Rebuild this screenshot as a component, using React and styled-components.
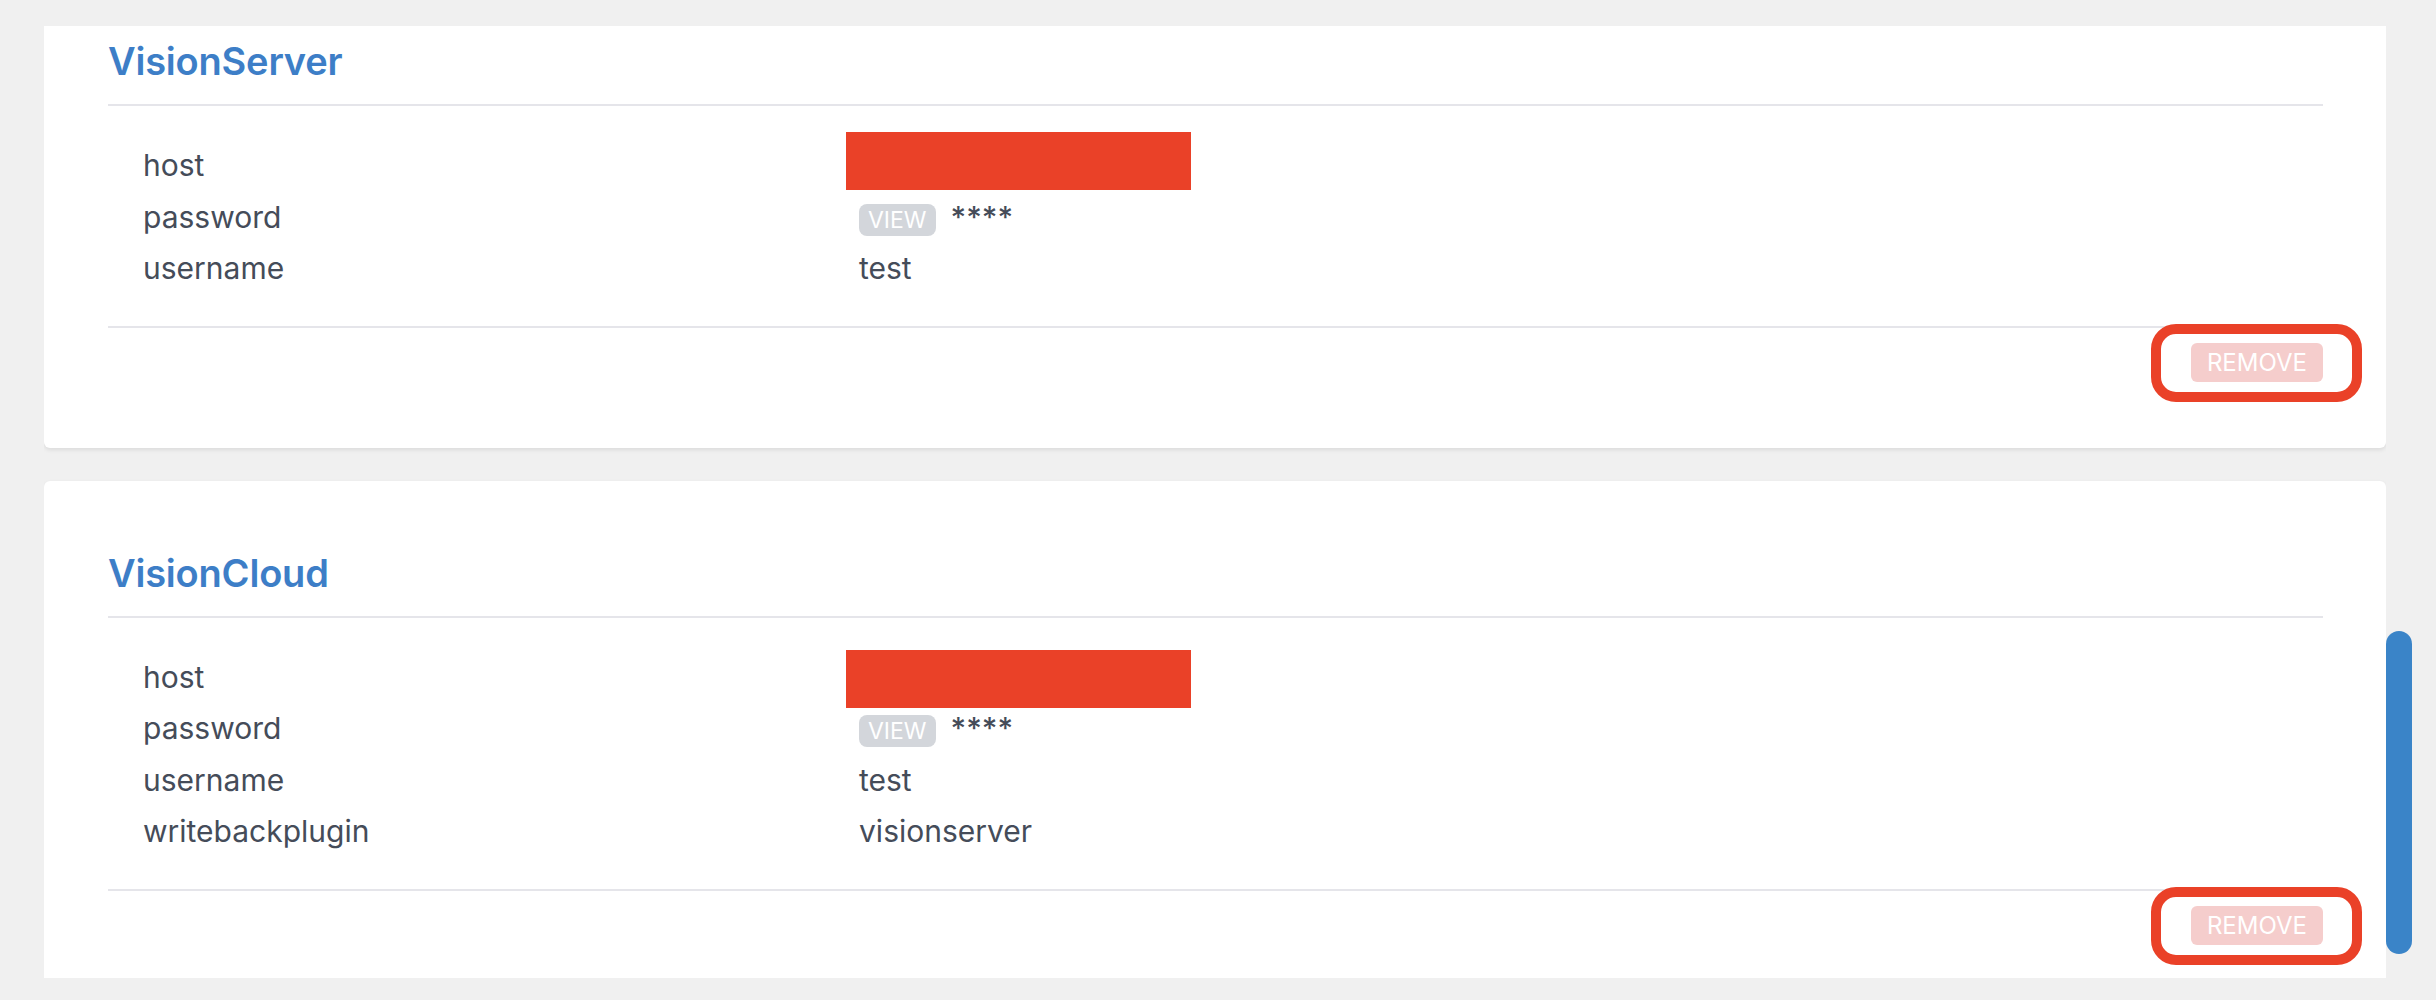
import React, { useLayoutEffect, useRef } from "react";
import styled, { createGlobalStyle } from "styled-components";

const GlobalStyle = createGlobalStyle`
  html, body {
    margin: 0;
    padding: 0;
    background: #f0f0f0;
    font-family: Inter, "Noto Sans", "Liberation Sans", sans-serif;
  }
`;

const plugins = [
  {
    name: "VisionServer",
    redactTop: -8,
    fields: [
      { key: "host", redacted: true },
      { key: "password", secret: true },
      { key: "username", value: "test" },
    ],
  },
  {
    name: "VisionCloud",
    redactTop: -2,
    fields: [
      { key: "host", redacted: true },
      { key: "password", secret: true },
      { key: "username", value: "test" },
      { key: "writebackplugin", value: "visionserver" },
    ],
  },
];

const App = () => {
  const scrollRef = useRef(null);

  useLayoutEffect(() => {
    if (scrollRef.current) scrollRef.current.scrollTop = 57;
  }, []);

  return (
    <Page>
      <GlobalStyle />
      <Viewport ref={scrollRef}>
        <List>
          {plugins.map((p) => (
            <Card key={p.name}>
              <Header>
                <Title>{p.name}</Title>
              </Header>
              <Fields>
                {p.fields.map((f) => (
                  <Row key={f.key}>
                    <Label>{f.key}</Label>
                    <Value>
                      {f.redacted && <Redaction $top={p.redactTop} />}
                      {f.secret && (
                        <>
                          <ViewBadge>VIEW</ViewBadge>
                          <Stars>****</Stars>
                        </>
                      )}
                      {f.value}
                    </Value>
                  </Row>
                ))}
              </Fields>
              <Footer>
                <RemoveWrap>
                  <Highlight />
                  <RemoveButton disabled>REMOVE</RemoveButton>
                </RemoveWrap>
              </Footer>
            </Card>
          ))}
        </List>
      </Viewport>
      <Track>
        <Thumb $offset={605} $size={323} />
      </Track>
    </Page>
  );
};

export default App;

const Page = styled.div`
  display: flex;
  align-items: flex-start;
  padding: 26px 0 0 44px;
  height: 1000px;
  box-sizing: border-box;
`;

const Viewport = styled.div`
  width: 2342px;
  height: 952px;
  overflow-y: auto;
  scrollbar-width: none;
  &::-webkit-scrollbar {
    display: none;
  }
`;

const List = styled.div`
  display: flex;
  flex-direction: column;
  gap: 33px;
  padding-bottom: 40px;
`;

const Card = styled.div`
  background: #fff;
  border-radius: 6px;
  box-shadow: 0 2px 4px rgba(0, 0, 0, 0.09);
  padding: 69px 63px 66px 64px;
`;

const Header = styled.div`
  padding-bottom: 20px;
  border-bottom: 2px solid #e5e5ea;
`;

const Title = styled.h3`
  margin: 0;
  font-size: 38px;
  line-height: 46px;
  font-weight: 600;
  color: #3d7ec7;
  letter-spacing: -0.2px;
`;

const Fields = styled.div`
  padding: 34px 35px 31px;
  border-bottom: 2px solid #e5e5ea;
`;

const Row = styled.div`
  display: grid;
  grid-template-columns: 716px 1fr;
  font-size: 30px;
  line-height: 51.5px;
  color: #454c59;
`;

const Label = styled.div``;

const Value = styled.div`
  position: relative;
`;

const Redaction = styled.div`
  position: absolute;
  left: -13px;
  top: ${(p) => p.$top}px;
  width: 345px;
  height: 58px;
  background: #ea4128;
`;

const ViewBadge = styled.span`
  display: inline-block;
  font-size: 23px;
  line-height: 24px;
  padding: 4px 9px;
  border-radius: 8px;
  background: #d3d6db;
  color: #fff;
  margin-right: 15px;
`;

const Stars = styled.span`
  font-weight: 500;
`;

const Footer = styled.div`
  display: flex;
  justify-content: flex-end;
  padding-top: 15px;
`;

const RemoveWrap = styled.div`
  position: relative;
`;

const Highlight = styled.div`
  position: absolute;
  inset: -19px -39px -20px -40px;
  border: 10px solid #ea4128;
  border-radius: 25px;
  pointer-events: none;
`;

const RemoveButton = styled.button`
  font-family: inherit;
  font-size: 24px;
  line-height: 29px;
  padding: 5px 16px;
  border: none;
  border-radius: 6px;
  background: #f5cdcc;
  color: #fff;
  cursor: not-allowed;
`;

const Track = styled.div`
  width: 26px;
  height: 952px;
  display: flex;
  flex-direction: column;
`;

const Thumb = styled.div`
  margin-top: ${(p) => p.$offset}px;
  height: ${(p) => p.$size}px;
  width: 26px;
  border-radius: 13px;
  background: #3a84c8;
`;
